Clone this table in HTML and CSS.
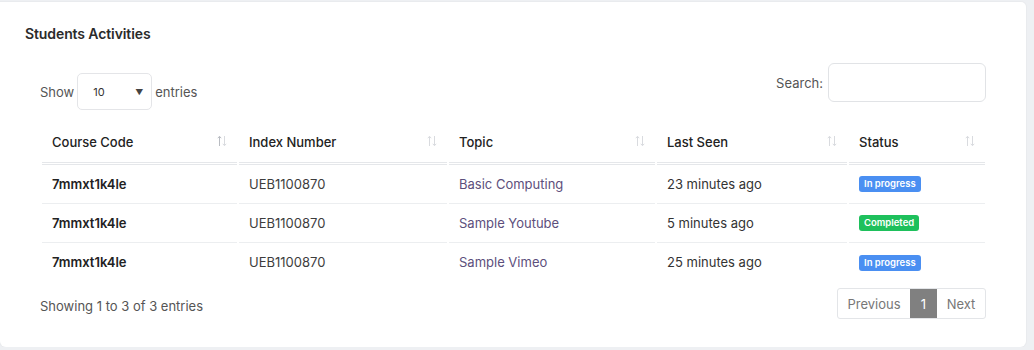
FILE: index.html
```html
<!DOCTYPE html>
<html>
<head>
<meta charset="utf-8">
<link rel="stylesheet" href="styles.css">
</head>
<body>
<div class="card">
  <div class="card-header">Students Activities</div>
  <div class="card-body">
    <div class="controls">
      <div class="length">
        <span>Show</span>
        <div class="select"><span>10</span><span class="caret">▼</span></div>
        <span>entries</span>
      </div>
      <div class="filter">
        <span>Search:</span>
        <div class="input"></div>
      </div>
    </div>
    <table class="table">
      <thead>
        <tr>
          <th class="c1">Course Code<svg class="sort" width="10" height="12" viewBox="0 0 10 12"><path d="M2.5 11V1.5M0.8 3.2L2.5 1.3L4.2 3.2" stroke="#b9bcc2" fill="none" stroke-width="1"/><path d="M7.5 1V10.5M5.8 8.8L7.5 10.7L9.2 8.8" stroke="#d9dbdf" fill="none" stroke-width="1"/></svg></th>
          <th class="c2">Index Number<svg class="sort" width="10" height="12" viewBox="0 0 10 12"><path d="M2.5 11V1.5M0.8 3.2L2.5 1.3L4.2 3.2" stroke="#d9dbdf" fill="none" stroke-width="1"/><path d="M7.5 1V10.5M5.8 8.8L7.5 10.7L9.2 8.8" stroke="#d9dbdf" fill="none" stroke-width="1"/></svg></th>
          <th class="c3">Topic<svg class="sort" width="10" height="12" viewBox="0 0 10 12"><path d="M2.5 11V1.5M0.8 3.2L2.5 1.3L4.2 3.2" stroke="#d9dbdf" fill="none" stroke-width="1"/><path d="M7.5 1V10.5M5.8 8.8L7.5 10.7L9.2 8.8" stroke="#d9dbdf" fill="none" stroke-width="1"/></svg></th>
          <th class="c4">Last Seen<svg class="sort" width="10" height="12" viewBox="0 0 10 12"><path d="M2.5 11V1.5M0.8 3.2L2.5 1.3L4.2 3.2" stroke="#d9dbdf" fill="none" stroke-width="1"/><path d="M7.5 1V10.5M5.8 8.8L7.5 10.7L9.2 8.8" stroke="#d9dbdf" fill="none" stroke-width="1"/></svg></th>
          <th class="c5">Status<svg class="sort" width="10" height="12" viewBox="0 0 10 12"><path d="M2.5 11V1.5M0.8 3.2L2.5 1.3L4.2 3.2" stroke="#d9dbdf" fill="none" stroke-width="1"/><path d="M7.5 1V10.5M5.8 8.8L7.5 10.7L9.2 8.8" stroke="#d9dbdf" fill="none" stroke-width="1"/></svg></th>
        </tr>
      </thead>
      <tbody>
        <tr>
          <td class="code">7mmxt1k4le</td>
          <td class="idx">UEB1100870</td>
          <td class="topic">Basic Computing</td>
          <td>23 minutes ago</td>
          <td><span class="badge blue">In progress</span></td>
        </tr>
        <tr>
          <td class="code">7mmxt1k4le</td>
          <td class="idx">UEB1100870</td>
          <td class="topic">Sample Youtube</td>
          <td>5 minutes ago</td>
          <td><span class="badge green">Completed</span></td>
        </tr>
        <tr>
          <td class="code">7mmxt1k4le</td>
          <td class="idx">UEB1100870</td>
          <td class="topic">Sample Vimeo</td>
          <td>25 minutes ago</td>
          <td><span class="badge blue">In progress</span></td>
        </tr>
      </tbody>
    </table>
    <div class="footer">
      <div class="info">Showing 1 to 3 of 3 entries</div>
      <div class="pagination">
        <span class="page prev">Previous</span>
        <span class="page active">1</span>
        <span class="page next">Next</span>
      </div>
    </div>
  </div>
</div>
</body>
</html>
```

FILE: styles.css
```css
* { box-sizing: border-box; }
html, body { margin: 0; padding: 0; }
body {
  background: #eef0f3;
  font-family: "Inter", "Noto Sans", sans-serif;
  font-size: 13px;
  color: #333;
  padding-top: 2px;
}
.card {
  width: 1026px;
  height: 345px;
  background: #fff;
  border-radius: 0 5px 6px 6px;
  box-shadow: 0 0 0 1px #e9ebee;
}
.card-header {
  padding: 22px 25px 0;
  font-size: 14px;
  font-weight: 600;
  color: #2b2b2b;
  line-height: 20px;
  letter-spacing: -0.1px;
}
.card-body {
  padding: 0 40px 0 40px;
}
.controls {
  display: flex;
  justify-content: space-between;
  align-items: flex-start;
  margin-top: 19px;
  height: 59px;
}
.length {
  display: flex;
  align-items: center;
  gap: 3px;
  margin-top: 10px;
  color: #555;
}
.select {
  width: 75px;
  height: 37px;
  border: 1px solid #e4e5e8;
  border-radius: 5px;
  display: flex;
  align-items: center;
  justify-content: space-between;
  padding: 0 8px 0 15px;
  font-size: 11px;
  color: #333;
}
.caret { font-size: 8px; color: #444; }
.filter {
  display: flex;
  align-items: center;
  gap: 5px;
  color: #555;
}
.input {
  width: 158px;
  height: 39px;
  border: 1px solid #e1e3e6;
  border-radius: 6px;
}
.table {
  border-collapse: separate;
  border-spacing: 2px 0;
  margin: 0 -1px 0 0;
  width: calc(100% + 1px);
}
.table th {
  text-align: left;
  font-weight: 500;
  color: #222;
  height: 43px;
  padding: 0 10px;
  border-bottom: 3px double #e5e7ea;
  position: relative;
  vertical-align: middle;
}
.sort {
  position: absolute;
  right: 10px;
  top: 13px;
}
.c1 { width: 195px; }
.c2 { width: 208px; }
.c3 { width: 206px; }
.c4 { width: 190px; }
.c5 { width: auto; }
.table td {
  height: 39px;
  padding: 0 10px 1px;
  border-bottom: 1px solid #eceef0;
  vertical-align: middle;
  color: #333;
}
.table tbody tr:last-child td { border-bottom: none; }
.table td.code { font-weight: 600; color: #222; }
.table td.idx { color: #3d3d3d; }
.table td.topic { color: #5d4f7c; }
.badge {
  display: inline-block;
  padding: 0 5px;
  height: 16px;
  line-height: 16px;
  border-radius: 3px;
  color: #fff;
  font-size: 9.5px;
  font-weight: 600;
  vertical-align: middle;
}
.badge.blue { background: #4a8ff2; }
.badge.green { background: #1ec05c; }
.footer {
  display: flex;
  justify-content: space-between;
  align-items: center;
  margin-top: 6px;
}
.info { color: #555; padding-top: 4px; }
.pagination {
  display: flex;
  height: 31px;
  border: 1px solid #e3e5e8;
  border-radius: 3px;
  overflow: hidden;
}
.page {
  display: flex;
  align-items: center;
  justify-content: center;
  color: #777;
}
.page.prev { width: 72px; }
.page.next { width: 48px; }
.page.active {
  width: 27px;
  background: #808080;
  color: #fff;
}
```
